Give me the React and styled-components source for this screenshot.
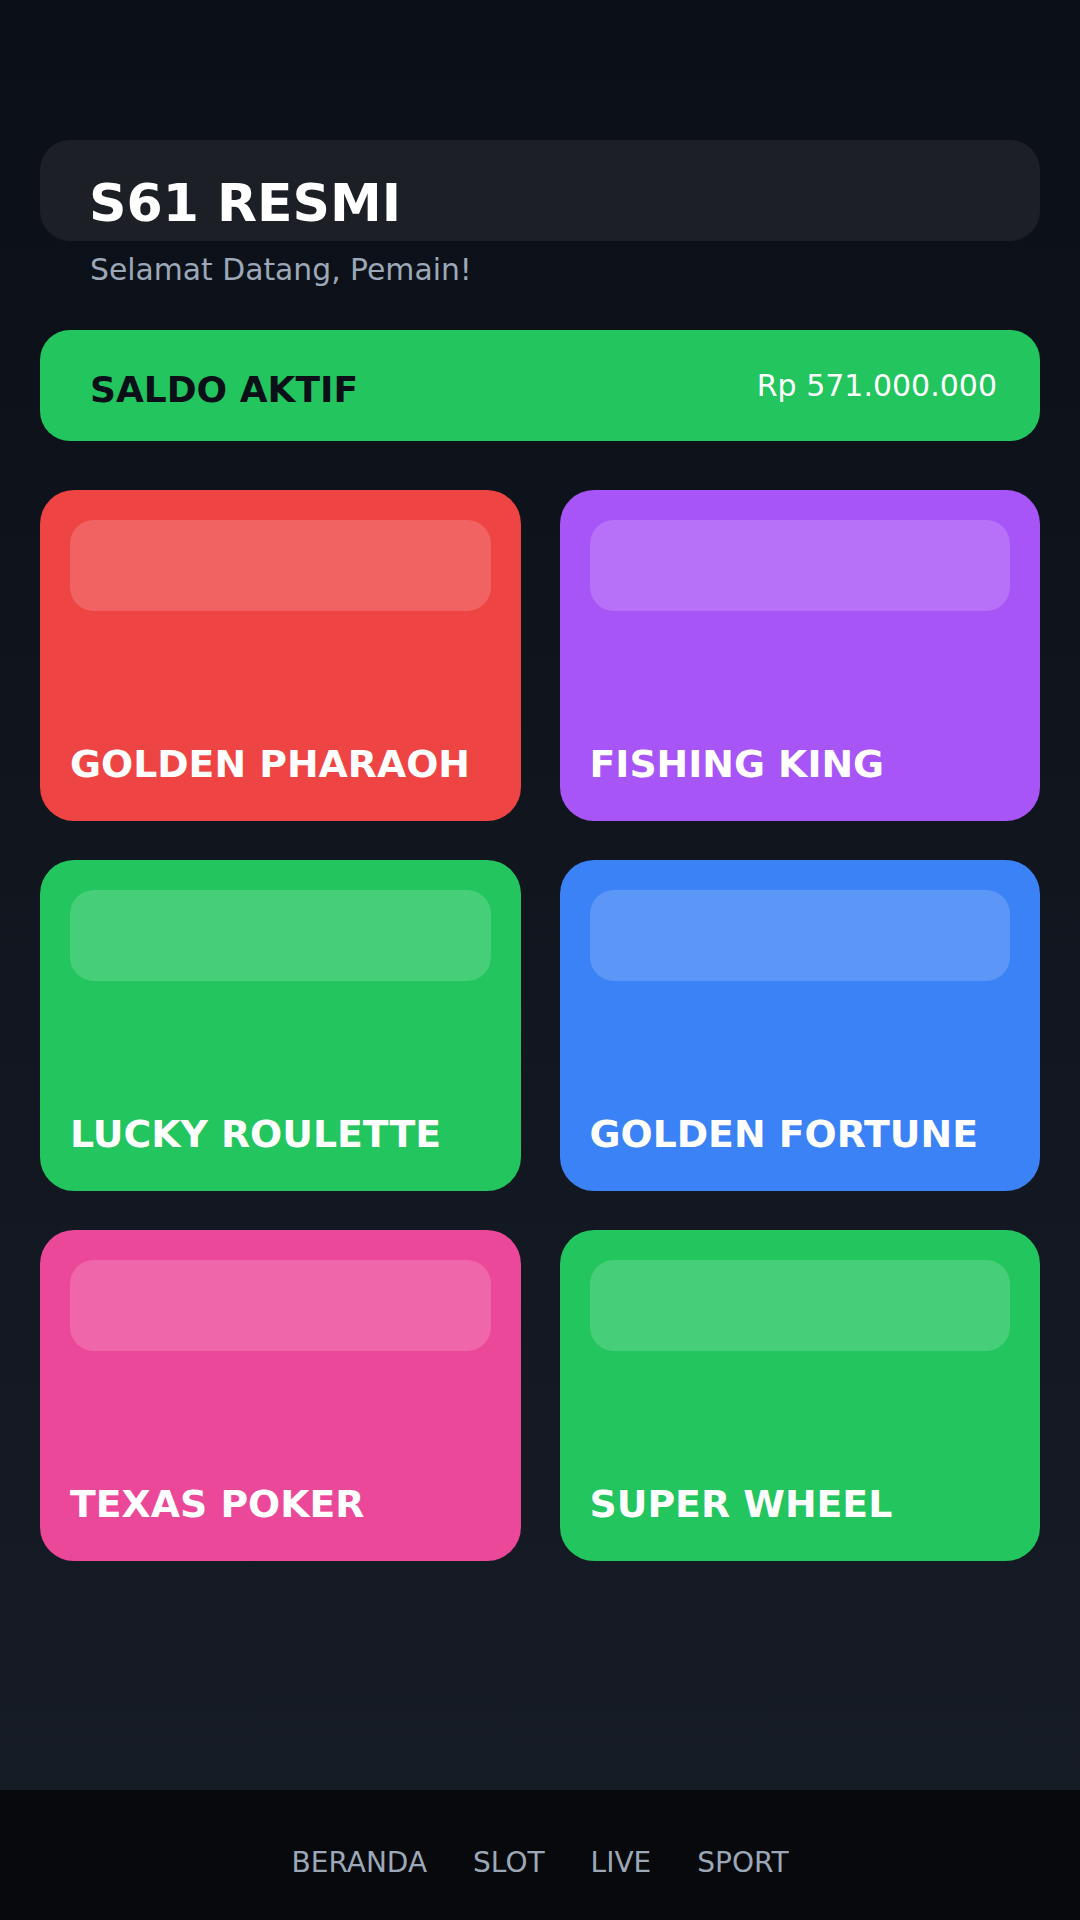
import React from 'react';
import styled, { createGlobalStyle } from 'styled-components';

const GlobalStyle = createGlobalStyle`
  * {
    box-sizing: border-box;
  }

  body {
    margin: 0;
    background: #07090c;
    font-family: 'DejaVu Sans', 'Noto Sans', sans-serif;
  }
`;

const Page = styled.div`
  width: 1080px;
  min-height: 1920px;
  display: flex;
  flex-direction: column;
  background: linear-gradient(180deg, #0b0f17 0px, #161c26 1790px);
`;

const Main = styled.main`
  flex: 1;
  padding: 140px 40px 0;
`;

const HeaderCard = styled.header`
  height: 101px;
  padding: 33px 49px 0;
  border-radius: 30px;
  background: #1c1f26;
`;

const Title = styled.h1`
  margin: 0;
  color: #ffffff;
  font-size: 52px;
  font-weight: bold;
  line-height: 1.164;
`;

const Subtitle = styled.p`
  margin: 12px 0 0 50px;
  color: #9ca8b8;
  font-size: 29.8px;
  line-height: 1.164;
`;

const BalanceCard = styled.section`
  height: 111px;
  margin-top: 42px;
  padding: 0 43px 0 50px;
  display: flex;
  align-items: center;
  justify-content: space-between;
  border-radius: 30px;
  background: #22c55e;
`;

const BalanceLabel = styled.span`
  margin-top: 8px;
  color: #0b0f17;
  font-size: 36px;
  font-weight: bold;
`;

const BalanceAmount = styled.span`
  color: #ffffff;
  font-size: 30px;
`;

const GameGrid = styled.div`
  margin-top: 49px;
  display: grid;
  grid-template-columns: 1fr 1fr;
  grid-auto-rows: 331px;
  column-gap: 39px;
  row-gap: 39px;
`;

const GameCard = styled.div`
  padding: 30px 30px 35px;
  display: flex;
  flex-direction: column;
  justify-content: space-between;
  border-radius: 34px;
  background: ${({ color }) => color};
`;

const Banner = styled.div`
  height: 91px;
  border-radius: 24px;
  background: rgba(255, 255, 255, 0.17);
`;

const GameName = styled.h2`
  margin: 0;
  color: #ffffff;
  font-size: 37.8px;
  font-weight: bold;
  line-height: 1.164;
`;

const BottomNav = styled.nav`
  height: 130px;
  padding-top: 57px;
  display: flex;
  justify-content: center;
  gap: 46px;
  background: #07090c;
`;

const NavItem = styled.a`
  color: #9ca8b8;
  font-size: 28px;
  line-height: 1.164;
  text-decoration: none;
`;

const games = [
  { name: 'GOLDEN PHARAOH', color: '#ef4444' },
  { name: 'FISHING KING', color: '#a855f7' },
  { name: 'LUCKY ROULETTE', color: '#22c55e' },
  { name: 'GOLDEN FORTUNE', color: '#3b82f6' },
  { name: 'TEXAS POKER', color: '#ec4899' },
  { name: 'SUPER WHEEL', color: '#22c55e' },
];

const menu = ['BERANDA', 'SLOT', 'LIVE', 'SPORT'];

function App() {
  return (
    <>
      <GlobalStyle />
      <Page>
        <Main>
          <HeaderCard>
            <Title>S61 RESMI</Title>
          </HeaderCard>
          <Subtitle>Selamat Datang, Pemain!</Subtitle>

          <BalanceCard>
            <BalanceLabel>SALDO AKTIF</BalanceLabel>
            <BalanceAmount>Rp 571.000.000</BalanceAmount>
          </BalanceCard>

          <GameGrid>
            {games.map((game, index) => (
              <GameCard key={index} color={game.color}>
                <Banner />
                <GameName>{game.name}</GameName>
              </GameCard>
            ))}
          </GameGrid>
        </Main>

        <BottomNav>
          {menu.map((item) => (
            <NavItem key={item} href="#">
              {item}
            </NavItem>
          ))}
        </BottomNav>
      </Page>
    </>
  );
}

export default App;
